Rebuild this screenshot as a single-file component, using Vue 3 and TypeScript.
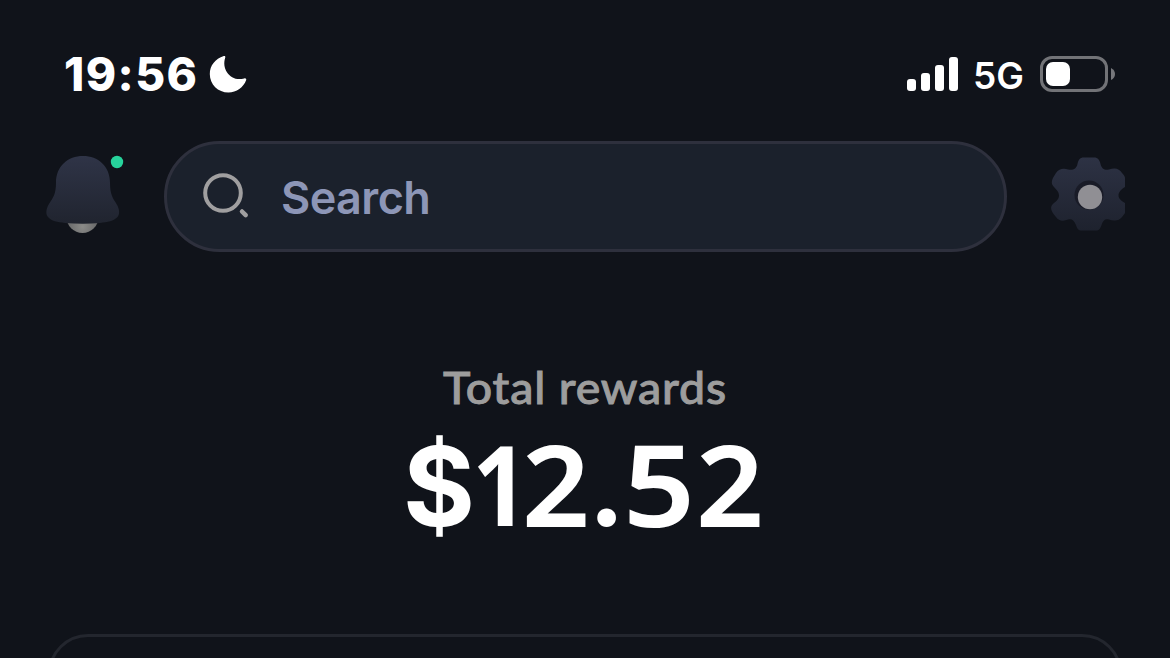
<script setup lang="ts">
interface Glyph {
  char: string
  kind: string
}

const signalBars: number[] = [12, 18, 26, 34]
const amount: Glyph[] = [
  { char: '$', kind: 'currency' },
  { char: '1', kind: 'one' },
  { char: '2', kind: 'two' },
  { char: '.', kind: 'point' },
  { char: '5', kind: 'five' },
  { char: '2', kind: 'two' },
]
</script>

<template>
  <main class="screen">
    <header class="status">
      <span class="time">19:56</span>
      <svg class="moon" width="38" height="38" viewBox="0 0 38 38">
        <path d="M14.8 1.1C15.8.7 16.7 1.4 16.2 2.7C12.2 14.5 22 27.2 35.2 23.4C36.7 23 37.6 23.9 37.2 25C34.5 32.4 27.5 37.5 19.5 37.5C9 37.5.8 29.4.8 19C.8 10.800 6.200 3.800 14.800 1.100Z" fill="#fff" />
      </svg>
      <div class="signal">
        <i v-for="h in signalBars" :key="h" :style="{ height: h + 'px' }"></i>
      </div>
      <span class="network">5G</span>
      <div class="battery"><i></i></div>
      <svg class="tip" width="4" height="12" viewBox="0 0 4 12"><path d="M0 0Q4 2 4 6T0 12Z" fill="#76777b" /></svg>
    </header>

    <nav class="toolbar">
      <svg class="bell" width="80" height="84" viewBox="0 0 80 84">
        <defs>
          <linearGradient id="bellFill" x1="0" y1="0" x2="0" y2="1">
            <stop offset="0" stop-color="#2f3447" />
            <stop offset="1" stop-color="#20242f" />
          </linearGradient>
          <radialGradient id="clapper" cx=".5" cy=".8" r=".5">
            <stop offset="0" stop-color="#8b8b89" />
            <stop offset="1" stop-color="#666768" />
          </radialGradient>
        </defs>
        <circle cx="37.500" cy="65" r="16" fill="url(#clapper)" />
        <path d="M38 4C53 4 65 14 65 31C65 43 68 46 71.500 52C74.500 57 75 62 72.500 65C69 69 62 70 55 71Q38 72.500 20 71C13 70 6 69 3 65C.500 62 1 57 4 52C8 46 11 42 11 31C11 14 23 4 38 4Z" fill="url(#bellFill)" />
        <circle cx="72" cy="10" r="6.200" fill="#27d39c" />
      </svg>

      <div class="search">
        <svg class="lens" width="48" height="48" viewBox="0 0 48 48" fill="none" stroke="#a09fa0">
          <circle cx="22" cy="22" r="17.800" stroke-width="4" />
          <path d="M41 40.500L44.700 44.200" stroke-width="4.500" stroke-linecap="round" />
        </svg>
        <span>Search</span>
      </div>

      <svg class="gear" width="74" height="76" viewBox="0 0 74 76">
        <defs>
          <linearGradient id="gearFill" x1="0" y1="0" x2="0" y2="1">
            <stop offset="0" stop-color="#2d3244" />
            <stop offset="1" stop-color="#1e222e" />
          </linearGradient>
        </defs>
        <path d="M33 1.500H43C47 1.500 48.500 4 49.500 8C50.500 13 54 14.500 58 13.500C65 11.500 68 13 71 17C72.500 19 74 20 74 22V31C69 34 67.500 37 67.500 39.500S69 44 74 47V57C73 58 72 60 71 61C68 65 63 65 58 63.500C54 62.500 52 64 50.500 69C49 73 48 74.500 45 74.500H31C27 74.500 26.500 73 25 69C23 64 21 62.500 17 63.500C12 65.500 8 65 5 61C0 55 -2 51 3 47C7 44 8 42 8 39.500S7 35 3 31C-1 27 1 23 5 17C8 13 12 12 17 13.500C22 14.500 25.500 13 26.500 8C27.500 4 28.500 1.500 33 1.500Z" fill="url(#gearFill)" />
        <circle cx="38" cy="39" r="14.500" fill="#191b27" />
        <circle cx="39" cy="41" r="12.200" fill="#908f94" />
      </svg>
    </nav>

    <section class="rewards">
      <div class="label">Total rewards</div>
      <div class="amount"><span v-for="(g, i) in amount" :key="i" :class="g.kind">{{ g.char }}</span></div>
    </section>

    <section class="card"></section>
  </main>
</template>

<style>
body {
  background: #10131a;
}
</style>

<style scoped>
.screen {
  box-sizing: border-box;
  width: 1170px;
  height: 658px;
  overflow: hidden;
  background: #10131a;
  color: #fff;
  font-family: Inter, "Liberation Sans", sans-serif;
}
svg {
  display: block;
  flex: none;
}
.status {
  display: flex;
  align-items: center;
  height: 60px;
  padding: 44px 55px 1px 64px;
}
.time {
  width: 145px;
  font-size: 46px;
  font-weight: 800;
  line-height: 60px;
  letter-spacing: 1.4px;
}
.signal {
  display: flex;
  align-items: flex-end;
  gap: 5px;
  height: 34px;
  margin-left: auto;
}
.signal i {
  width: 9px;
  border-radius: 3px;
  background: #fff;
}
.network {
  width: 50px;
  margin: 3px 0 0 15px;
  font-size: 37px;
  font-weight: 600;
  line-height: 60px;
}
.battery {
  box-sizing: border-box;
  width: 68px;
  height: 36px;
  margin-left: 17px;
  padding: 3px;
  border: 3px solid #727377;
  border-radius: 12px;
}
.battery i {
  display: block;
  width: 24px;
  height: 24px;
  border-radius: 7px;
  background: #fff;
}
.tip {
  margin-left: 3px;
}
.toolbar {
  display: flex;
  align-items: center;
  height: 111px;
  padding: 36px 45px 0;
}
.bell {
  margin-top: -5px;
}
.search {
  box-sizing: border-box;
  display: flex;
  align-items: center;
  width: 843px;
  height: 111px;
  margin-left: 39px;
  padding-left: 34px;
  border: 3px solid #2e303d;
  border-radius: 56px;
  background: #1b212c;
  color: #8d96b7;
  font-size: 45px;
  font-weight: 600;
  letter-spacing: -0.6px;
}
.lens {
  margin-top: -4px;
}
.search span {
  margin: 1px 0 0 32px;
}
.gear {
  margin: -5px 0 0 44px;
}
.rewards {
  height: 382px;
  text-align: center;
  font-family: Lato, "Open Sans", sans-serif;
}
.label {
  padding-top: 105px;
  color: #9d9d9d;
  font-size: 44px;
  font-weight: 500;
  line-height: 60px;
  letter-spacing: 0.8px;
  -webkit-text-stroke: 0.9px #9d9d9d;
  transform: scaleX(1.055);
}
.amount {
  display: flex;
  align-items: baseline;
  justify-content: center;
  height: 140px;
  font-family: Inter, sans-serif;
  font-size: 110px;
  font-weight: 650;
  line-height: 132px;
}
.amount span {
  display: flex;
  justify-content: center;
}
.amount .currency {
  width: 67px;
}
.amount .one {
  width: 48px;
  font-family: "Open Sans", sans-serif;
  font-size: 112px;
  font-weight: 700;
  letter-spacing: -6px;
  transform: translateX(0.4px) scaleX(0.87);
}
.amount .two,
.amount .five {
  width: 70px;
  font-family: "Open Sans", sans-serif;
  font-size: 110px;
  font-weight: 600;
  -webkit-text-stroke: 2px #fff;
  transform: scaleX(1.06);
}
.amount .point {
  width: 32px;
}
.amount .five {
  width: 72px;
  transform: scaleX(1.12);
}
.card {
  box-sizing: border-box;
  width: 1074px;
  height: 100px;
  margin: 0 auto;
  border: 3px solid #23262e;
  border-radius: 40px;
}
</style>
